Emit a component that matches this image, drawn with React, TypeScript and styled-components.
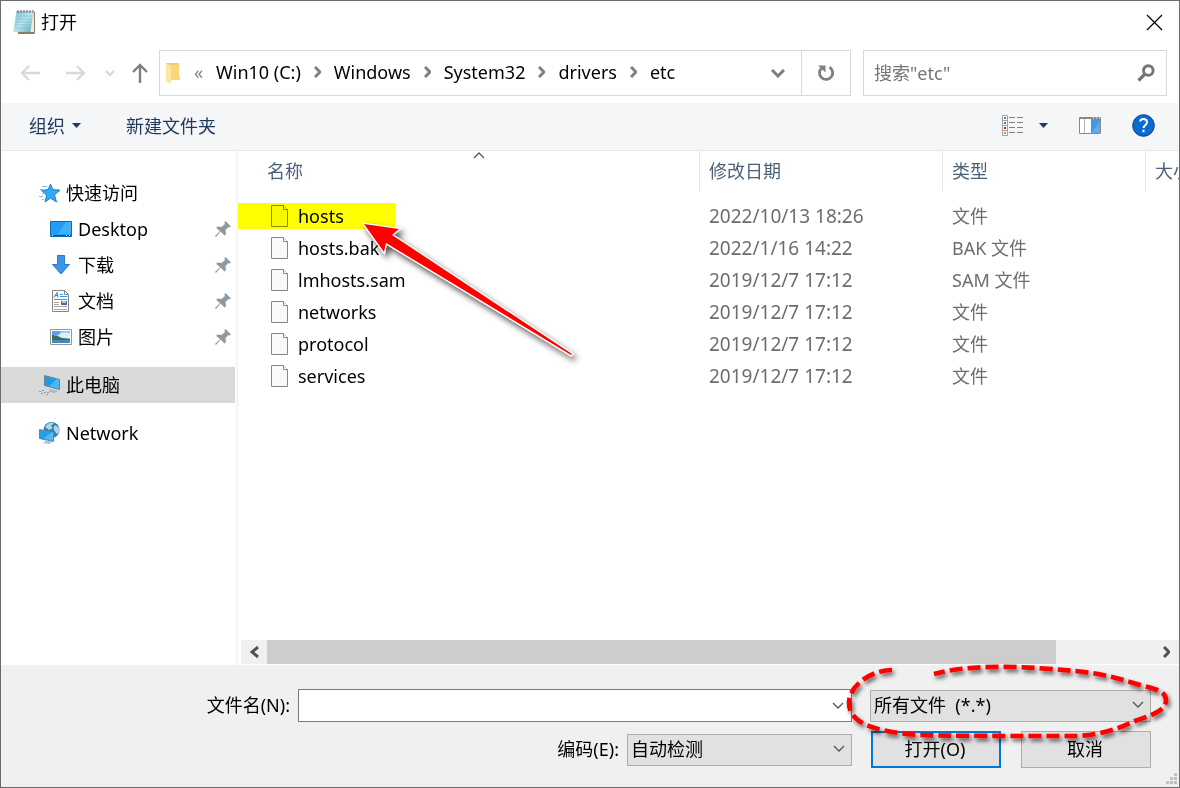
import React from "react";
import styled, { createGlobalStyle, css } from "styled-components";

const GlobalStyle = createGlobalStyle`
  *, *::before, *::after { box-sizing: border-box; }
  body {
    margin: 0;
    background: #fff;
    color: #000;
    font: 18px/24px "Noto Sans", "Noto Sans CJK SC", sans-serif;
  }
  button, input, select { font: inherit; color: inherit; }
  svg { display: block; flex: none; }
`;

const Dialog = styled.main`
  display: flex;
  flex-direction: column;
  min-height: 100vh;
  border: 1px solid #6b6b6b;
  background: #fff;
  overflow: hidden;
`;

const TitleBar = styled.header`
  display: flex;
  align-items: center;
  gap: 5px;
  height: 42px;
  padding-left: 11px;
`;

const Title = styled.h1`
  flex: 1;
  margin: 0;
  font-size: 18px;
  font-weight: 400;
`;

const PlainButton = styled.button`
  display: flex;
  align-items: center;
  justify-content: center;
  padding: 0;
  border: 0;
  background: none;
`;

const CloseButton = styled(PlainButton)`
  width: 50px;
  height: 42px;
`;

const NavBar = styled.nav`
  display: flex;
  height: 60px;
  padding: 7px 12px 7px 6px;
`;

const NavButton = styled(PlainButton)<{ $width: number }>`
  width: ${(p) => p.$width}px;
  color: ${(p) => (p.disabled ? "#d9d9d9" : "#7f7f7f")};
`;

const AddressBar = styled.div`
  display: flex;
  flex: 1;
  align-items: center;
  padding-left: 6px;
  border: 1px solid #d9d9d9;
`;

const Crumbs = styled.ol`
  display: flex;
  flex: 1;
  align-items: center;
  gap: 13px;
  margin: 0;
  padding: 0 0 2px 14px;
  list-style: none;
`;

const Crumb = styled.li`
  display: flex;
  align-items: center;
  gap: 13px;
  white-space: nowrap;
`;

const CrumbMore = styled.li`
  width: 9px;
  color: #7f7f7f;
`;

const CrumbLink = styled.a`
  color: #000;
  text-decoration: none;
`;

const AddressButton = styled(PlainButton)<{ $divided?: boolean }>`
  align-self: stretch;
  width: ${(p) => (p.$divided ? 49 : 46)}px;
  border-left: ${(p) => (p.$divided ? "1px solid #d9d9d9" : "0")};
`;

const SearchBox = styled.div`
  display: flex;
  align-items: center;
  width: 304px;
  margin-left: 12px;
  border: 1px solid #d9d9d9;
`;

const SearchInput = styled.input`
  flex: 1;
  min-width: 0;
  padding: 0 0 0 10px;
  border: 0;
  outline: 0;
  background: none;
  &::placeholder { color: #757575; opacity: 1; }
`;

const SearchButton = styled(PlainButton)`
  width: 41px;
  height: 44px;
`;

const Toolbar = styled.div`
  display: flex;
  align-items: center;
  height: 48px;
  padding: 0 24px 2px 28px;
  border-bottom: 1px solid #e6e7e8;
  background: #f5f6f7;
  color: #1e395b;
`;

const ToolButton = styled(PlainButton)`
  gap: 7px;
  height: 32px;
`;

const ToolGroup = styled.div`
  display: flex;
  flex: 1;
  align-items: center;
  gap: 45px;
`;

const ViewTools = styled.div`
  display: flex;
  align-items: center;
  gap: 31px;
`;

const ViewButton = styled(ToolButton)`
  gap: 16px;
`;

const Content = styled.div`
  display: flex;
  flex: 1;
`;

const Sidebar = styled.aside`
  width: 237px;
  padding: 24px 1px 0 0;
  border-right: 2px solid #f5f5f5;
`;

const TreeList = styled.ul`
  margin: 0;
  padding: 0;
  list-style: none;
`;

const TreeRow = styled.li<{ $nested?: boolean; $selected?: boolean; $spaced?: boolean }>`
  display: flex;
  align-items: center;
  height: 36px;
  margin-top: ${(p) => (p.$spaced ? 12 : 0)}px;
  padding: 0 4px 0 ${(p) => (p.$nested ? 48 : 36)}px;
  background: ${(p) => (p.$selected ? "#d9d9d9" : "none")};
`;

const TreeLink = styled.a`
  display: flex;
  flex: 1;
  align-items: center;
  gap: 5px;
  color: #000;
  text-decoration: none;
`;

const FilePane = styled.section`
  position: relative;
  display: flex;
  flex: 1;
  flex-direction: column;
  min-width: 0;
`;

const TableClip = styled.div`
  flex: 1;
  overflow: hidden;
`;

const FileTable = styled.table`
  width: 1045px;
  border-collapse: collapse;
  table-layout: fixed;
`;

const Column = styled.col<{ $width: number }>`
  width: ${(p) => p.$width}px;
`;

const HeadCell = styled.th`
  height: 49px;
  padding: 0;
  font-weight: 400;
  text-align: left;
  vertical-align: top;
`;

const HeadLabel = styled.div<{ $first?: boolean }>`
  display: flex;
  position: relative;
  align-items: center;
  height: 40px;
  margin-left: ${(p) => (p.$first ? 20 : 0)}px;
  padding-left: 9px;
  border-left: ${(p) => (p.$first ? "0" : "1px solid #e5e5e5")};
  color: #4c607a;
`;

const SortMark = styled.span`
  display: flex;
  position: absolute;
  top: 0;
  right: 0;
  left: 0;
  justify-content: center;
`;

const cell = css`
  height: 32px;
  padding: 0 0 0 10px;
  color: #6d6d6d;
  white-space: nowrap;
`;

const Cell = styled.td`
  ${cell}
`;

const DateCell = styled.td`
  ${cell}
  font-size: 19px;
`;

const NameCell = styled.td`
  position: relative;
  height: 32px;
  padding: 0 0 0 33px;
`;

const FileName = styled.span`
  display: flex;
  align-items: center;
  gap: 10px;
`;

const Marker = styled.span`
  position: absolute;
  z-index: 1;
  top: 3px;
  left: 0;
  width: 157px;
  height: 26px;
  background: #ff0;
  mix-blend-mode: multiply;
`;

const ArrowOverlay = styled.svg`
  position: absolute;
  z-index: 2;
  top: 59px;
  left: 112px;
  pointer-events: none;
`;

const ScrollBar = styled.div`
  display: flex;
  height: 24px;
  margin: 0 0 1px 3px;
  background: #f0f0f0;
`;

const ScrollButton = styled(PlainButton)`
  width: 26px;
`;

const ScrollTrack = styled.div`
  flex: 1;
`;

const ScrollThumb = styled.div`
  width: 89%;
  height: 24px;
  background: #cdcdcd;
`;

const Footer = styled.form`
  position: relative;
  display: flex;
  flex-direction: column;
  gap: 9px;
  height: 122px;
  padding: 24px 28px 0 0;
  background: #f0f0f0;
`;

const FieldRow = styled.div`
  display: flex;
  align-items: center;
  justify-content: flex-end;
`;

const FieldLabel = styled.label<{ $width?: number }>`
  width: ${(p) => (p.$width ? `${p.$width}px` : "auto")};
  margin-right: 8px;
  padding-bottom: 2px;
  text-align: right;
`;

const ComboBox = styled.div`
  display: flex;
  flex: 1;
  height: 33px;
  border: 1px solid #7a7a7a;
  background: #fff;
`;

const ComboInput = styled.input`
  flex: 1;
  min-width: 0;
  padding: 0 4px;
  border: 0;
  outline: 0;
  background: none;
`;

const ComboButton = styled(PlainButton)`
  width: 26px;
`;

const SelectWrap = styled.div<{ $width: number }>`
  position: relative;
  width: ${(p) => p.$width}px;
  height: 32px;
`;

const SelectBox = styled.select`
  width: 100%;
  height: 100%;
  padding: 0 28px 2px 3px;
  appearance: none;
  border: 1px solid #adadad;
  border-radius: 0;
  background: #e1e1e1;
  white-space: pre;
`;

const SelectMark = styled.span`
  position: absolute;
  top: 11px;
  right: 7px;
  pointer-events: none;
`;

const RingOverlay = styled.svg`
  position: absolute;
  z-index: 2;
  top: -30px;
  left: -30px;
  pointer-events: none;
`;

const DialogButton = styled.button<{ $primary?: boolean }>`
  width: 130px;
  height: 37px;
  padding: 0 2px 2px 0;
  border: ${(p) => (p.$primary ? "2px solid #0078d7" : "1px solid #adadad")};
  background: #e1e1e1;
`;

const Spacer = styled.span<{ $width: number }>`
  width: ${(p) => p.$width}px;
`;

const Grip = styled.span`
  position: absolute;
  right: 2px;
  bottom: 2px;
`;

const NotepadIcon = () => (
  <svg width="24" height="26" viewBox="0 0 24 26">
    <defs>
      <linearGradient id="pad" x1="0" y1="0" x2="1" y2="1">
        <stop offset="0" stopColor="#7cc0cf" />
        <stop offset=".5" stopColor="#b8e6ee" />
        <stop offset="1" stopColor="#62afc2" />
      </linearGradient>
    </defs>
    <path d="M6 3h17v21l-1 1H6z" fill="#8b7d62" />
    <path d="M6 3h16v20H6z" fill="#f3ead3" />
    <path d="M4.500 2h17l-3 21H1z" fill="url(#pad)" />
    <path d="M5 7h15M4 10h15M4 13h15M3 16h15M3 19h15" stroke="#5ba3b5" strokeOpacity=".4" />
    <path d="M6 1v3M9 1v3M12 1v3M15 1v3M18 1v3M21 1v3" stroke="#59676b" />
  </svg>
);

const CloseIcon = () => (
  <svg width="17" height="17" viewBox="0 0 17 17">
    <path d="M1 1l15 15M16 1L1 16" stroke="#000" strokeWidth="1.2" fill="none" />
  </svg>
);

const ArrowIcon = ({ d }: { d: string }) => (
  <svg width="20" height="20" viewBox="0 0 20 20">
    <path d={d} fill="none" stroke="currentColor" strokeWidth="2.4" />
  </svg>
);

const BoldChevron = ({
  dir,
  color = "#7f7f7f",
  width = 3,
}: {
  dir: "down" | "right" | "left";
  color?: string;
  width?: number;
}) => {
  const shape = {
    down: { w: 14, h: 9, d: "M1 1l6 6 6-6" },
    right: { w: 7, h: 12, d: "M1 1l5 5-5 5" },
    left: { w: 9, h: 12, d: "M8 1L2 6l6 5" },
  }[dir];
  return (
    <svg width={shape.w} height={shape.h} viewBox={`0 0 ${shape.w} ${shape.h}`}>
      <path d={shape.d} fill="none" stroke={color} strokeWidth={width} />
    </svg>
  );
};

const ThinChevron = ({ up }: { up?: boolean }) => (
  <svg width="12" height="8" viewBox="0 0 12 8">
    <path d={up ? "M1 7l5-5 5 5" : "M1 1l5 5 5-5"} fill="none" stroke="#555" strokeWidth="1.3" />
  </svg>
);

const FolderIcon = () => (
  <svg width="14" height="22" viewBox="0 0 14 22">
    <path d="M0 1h13v11l1 6H4z" fill="#f5cb65" />
    <path d="M5 3h8v15H5z" fill="#f7d67f" />
    <path d="M0 1l5 3v18l-5-3z" fill="#fde6a4" />
  </svg>
);

const RefreshIcon = () => (
  <svg width="18" height="18" viewBox="0 0 18 18">
    <path d="M12.500 3.2A6.6 6.6 0 1 1 4.6 4" fill="none" stroke="#7f7f7f" strokeWidth="2.8" />
    <path d="M1 1.500h7.500V8.500z" fill="#7f7f7f" />
  </svg>
);

const SearchIcon = () => (
  <svg width="18" height="18" viewBox="0 0 18 18">
    <circle cx="11.3" cy="6.5" r="4.8" fill="none" stroke="#757575" strokeWidth="2.9" />
    <path d="M8 10L1.500 16.500" stroke="#757575" strokeWidth="3.2" />
  </svg>
);

const CaretIcon = () => (
  <svg width="9" height="5" viewBox="0 0 9 5">
    <path d="M0 0h9L4.500 5z" fill="#1e395b" />
  </svg>
);

const ListViewIcon = () => (
  <svg width="21" height="21" viewBox="0 0 21 21">
    <path d="M.500 .500h5v20h-5zM.500 5.500h5M.500 10.500h5M.500 15.500h5" fill="#fff" stroke="#a0a0a0" />
    <path d="M2 2h2v2H2z" fill="#3d8a83" />
    <path d="M2 7h2v2H2z" fill="#4775b5" />
    <path d="M2 12h2v2H2z" fill="#c01515" />
    <path d="M2 17h2v2H2z" fill="#90a33a" />
    <path
      d="M7 2.500h6M15 2.500h6M7 7.500h6M15 7.500h6M7 12.500h6M15 12.500h6M7 17.500h6M15 17.500h6"
      stroke="#808080"
    />
  </svg>
);

const PreviewIcon = () => (
  <svg width="22" height="17" viewBox="0 0 22 17">
    <path d="M.500 .500h21v16H.500z" fill="#fff" stroke="#8a8a8a" />
    <path d="M1 1h20" stroke="#8a8a8a" strokeWidth="2" />
    <path d="M5.500 2v14" stroke="#b0b0b0" />
    <path d="M12 2h9v14h-9z" fill="#429be2" />
    <path d="M12 16L21 4v12z" fill="#5aaced" />
    <path d="M14 1h1M17 1h1M20 1h1" stroke="#fff" />
  </svg>
);

const HelpIcon = () => (
  <svg width="23" height="23" viewBox="0 0 23 23">
    <circle cx="11.5" cy="11.5" r="10.8" fill="#0c6bd0" stroke="#0b4287" />
    <path
      d="M8 7.500c1.200-3.600 7-3 7 .7 0 3-3.500 3-3.500 5.800M11.500 15.800v2.400"
      fill="none"
      stroke="#fff"
      strokeWidth="2"
    />
  </svg>
);

const StarIcon = () => (
  <svg width="24" height="20" viewBox="0 0 24 20">
    <path
      d="M13.500 1l2.200 5.600 7.300.5-5.500 4.800 2 7-6-3.700L8 19l1.600-6.800L4.500 7.400l6.600-.8z"
      fill="#35a8f3"
      stroke="#1a83ce"
    />
    <path d="M5 3.500h5M3 6.500h3M5 10.500h3M2 13.500h4M5 16.500h2" stroke="#79c3ef" />
  </svg>
);

const DesktopIcon = () => (
  <svg width="24" height="18" viewBox="0 0 24 18">
    <path d="M1.500 1.500h21v15h-21z" fill="#1f9dfb" stroke="#116da8" />
    <path d="M9 14L17 2h5v12z" fill="#42afff" />
    <path d="M2 15.500h20" stroke="#08548d" />
    <path d="M3 15.500h1M17 15.500h1M20 15.500h1" stroke="#fff" />
  </svg>
);

const DownloadIcon = () => (
  <svg width="24" height="20" viewBox="0 0 24 20">
    <path d="M8.500 .500h7v9h5L12 19 3.500 9.500h5z" fill="#3a96e8" stroke="#2b79c8" />
  </svg>
);

const DocumentIcon = () => (
  <svg width="24" height="22" viewBox="0 0 24 22">
    <path d="M3.500 .500h12l4 4v17h-16z" fill="#fff" stroke="#858585" />
    <path d="M15.500 .500v4h4" fill="none" stroke="#858585" />
    <path d="M5 7.500l3-5 1 5M6 5.500h3" fill="none" stroke="#2784c9" />
    <path d="M11 4.500h3M11 6.500h7M5 9.500h13" stroke="#2e9be3" />
    <path d="M5 12.500h5M5 14.500h5M5 16.500h13M5 19.500h13" stroke="#a4a4a4" />
    <path d="M12 11h6v4h-6z" fill="#4c6c9c" />
    <path d="M13 11h4v2h-4z" fill="#a6c9e9" />
  </svg>
);

const PictureIcon = () => (
  <svg width="24" height="18" viewBox="0 0 24 18">
    <path d="M1.500 1.500h21v15h-21z" fill="#fff" stroke="#959595" />
    <path d="M3 3h18v12H3z" fill="#8fc4f2" />
    <path d="M3 3h7l3 3-10 2z" fill="#5f9fe2" />
    <path d="M9 7c3-3 7-3 12-2v5h-9z" fill="#deeffa" />
    <path d="M3 7l5 1 5 2 8 1v2H3z" fill="#3c6c5c" />
    <path d="M3 12h18v3H3z" fill="#4a86b8" />
  </svg>
);

const ComputerIcon = () => (
  <svg width="24" height="22" viewBox="0 0 24 22">
    <path d="M7.500 1.500l15 4v10l-15-4z" fill="#1e9be8" stroke="#70828c" />
    <path d="M12 12L20 5l2 1v9z" fill="#4ab6f4" />
    <path d="M12 15l9 2-3 2-6-1z" fill="#aeb7bd" />
    <path d="M3 16l11 2-3 3-10-2z" fill="#d3dade" />
    <path d="M2 17.500h2M5 16.500h2M7 18.500h2M4 19.500h2M10 18.500h2M9 20.500h2" stroke="#8f9ca3" />
  </svg>
);

const NetworkIcon = () => (
  <svg width="24" height="24" viewBox="0 0 24 24">
    <circle cx="14.5" cy="9" r="8" fill="#367fac" />
    <path d="M8 6c2-4 6-5 9-4l-3 3 2 2-4 2zM17.500 4l4 2 1 5-3 2-3-5z" fill="#acd3e7" />
    <path d="M2.500 8.500l14 3v9l-14-3z" fill="#20a0eb" stroke="#668798" />
    <path d="M7 17l8-6 1 1v8z" fill="#4fbaf4" />
    <path d="M8 19v2l-3 1 7 1 3-1-3-2z" fill="#b8c1c6" />
  </svg>
);

const PinIcon = () => (
  <svg width="16" height="16" viewBox="0 0 16 16">
    <path d="M10.500 0L16 5.500l-1.500 1-1-.5-3 3 .5 4-1.500 1.500-4-4L1 16l-1-1 5-5-3.800-3L2.500 5.500l4 .500 3.500-3-.7-1.500z" fill="#8d99a3" />
  </svg>
);

const FileIcon = () => (
  <svg width="17" height="22" viewBox="0 0 17 22">
    <path d="M.500 .500h12l4 4v17H.500z" fill="#f8f9fa" stroke="#868686" />
    <path d="M12.500 .500v4h4" fill="#fff" stroke="#868686" />
  </svg>
);

const crumbs = ["Win10 (C:)", "Windows", "System32", "drivers", "etc"];

const quickLinks = [
  { label: "Desktop", Icon: DesktopIcon },
  { label: "下载", Icon: DownloadIcon },
  { label: "文档", Icon: DocumentIcon },
  { label: "图片", Icon: PictureIcon },
];

const files = [
  { name: "hosts", date: "2022/10/13 18:26", type: "文件", marked: true },
  { name: "hosts.bak", date: "2022/1/16 14:22", type: "BAK 文件" },
  { name: "lmhosts.sam", date: "2019/12/7 17:12", type: "SAM 文件" },
  { name: "networks", date: "2019/12/7 17:12", type: "文件" },
  { name: "protocol", date: "2019/12/7 17:12", type: "文件" },
  { name: "services", date: "2019/12/7 17:12", type: "文件" },
];

export default function App() {
  return (
    <>
      <GlobalStyle />
      <Dialog lang="zh-CN">
        <TitleBar>
          <NotepadIcon />
          <Title>打开</Title>
          <CloseButton type="button" aria-label="关闭">
            <CloseIcon />
          </CloseButton>
        </TitleBar>

        <NavBar>
          <NavButton $width={46} type="button" disabled aria-label="后退">
            <ArrowIcon d="M20 10H2M9 3l-7 7 7 7" />
          </NavButton>
          <NavButton $width={46} type="button" disabled aria-label="前进">
            <ArrowIcon d="M0 10h18M11 3l7 7-7 7" />
          </NavButton>
          <NavButton $width={21} type="button" disabled aria-label="最近">
            <svg width="10" height="7" viewBox="0 0 10 7">
              <path d="M1 1l4 4 4-4" fill="none" stroke="currentColor" strokeWidth="2.4" />
            </svg>
          </NavButton>
          <NavButton $width={39} type="button" aria-label="上移">
            <ArrowIcon d="M10 20V2M3 9l7-7 7 7" />
          </NavButton>
          <AddressBar>
            <FolderIcon />
            <Crumbs>
              <CrumbMore>«</CrumbMore>
              {crumbs.map((c, i) => (
                <Crumb key={c}>
                  <CrumbLink href="#">{c}</CrumbLink>
                  {i < crumbs.length - 1 && <BoldChevron dir="right" />}
                </Crumb>
              ))}
            </Crumbs>
            <AddressButton type="button" aria-label="历史记录">
              <BoldChevron dir="down" />
            </AddressButton>
            <AddressButton $divided type="button" aria-label="刷新">
              <RefreshIcon />
            </AddressButton>
          </AddressBar>
          <SearchBox>
            <SearchInput type="text" aria-label="搜索" placeholder={'搜索"etc"'} />
            <SearchButton type="button" aria-label="开始搜索">
              <SearchIcon />
            </SearchButton>
          </SearchBox>
        </NavBar>

        <Toolbar>
          <ToolGroup>
            <ToolButton type="button">
              组织
              <CaretIcon />
            </ToolButton>
            <ToolButton type="button">新建文件夹</ToolButton>
          </ToolGroup>
          <ViewTools>
            <ViewButton type="button" aria-label="更改视图">
              <ListViewIcon />
              <CaretIcon />
            </ViewButton>
            <ToolButton type="button" aria-label="预览窗格">
              <PreviewIcon />
            </ToolButton>
            <ToolButton type="button" aria-label="帮助">
              <HelpIcon />
            </ToolButton>
          </ViewTools>
        </Toolbar>

        <Content>
          <Sidebar>
            <TreeList>
              <TreeRow>
                <TreeLink href="#">
                  <StarIcon />
                  快速访问
                </TreeLink>
              </TreeRow>
              {quickLinks.map(({ label, Icon }) => (
                <TreeRow key={label} $nested>
                  <TreeLink href="#">
                    <Icon />
                    {label}
                  </TreeLink>
                  <PinIcon />
                </TreeRow>
              ))}
              <TreeRow $selected $spaced>
                <TreeLink href="#">
                  <ComputerIcon />
                  此电脑
                </TreeLink>
              </TreeRow>
              <TreeRow $spaced>
                <TreeLink href="#">
                  <NetworkIcon />
                  Network
                </TreeLink>
              </TreeRow>
            </TreeList>
          </Sidebar>

          <FilePane>
            <TableClip>
              <FileTable>
                <colgroup>
                  <Column $width={461} />
                  <Column $width={243} />
                  <Column $width={203} />
                  <Column $width={138} />
                </colgroup>
                <thead>
                  <tr>
                    <HeadCell>
                      <HeadLabel $first>
                        名称
                        <SortMark>
                          <ThinChevron up />
                        </SortMark>
                      </HeadLabel>
                    </HeadCell>
                    <HeadCell>
                      <HeadLabel>修改日期</HeadLabel>
                    </HeadCell>
                    <HeadCell>
                      <HeadLabel>类型</HeadLabel>
                    </HeadCell>
                    <HeadCell>
                      <HeadLabel>大小</HeadLabel>
                    </HeadCell>
                  </tr>
                </thead>
                <tbody>
                  {files.map((f) => (
                    <tr key={f.name}>
                      <NameCell>
                        <FileName>
                          <FileIcon />
                          {f.name}
                        </FileName>
                        {f.marked && <Marker />}
                      </NameCell>
                      <DateCell>{f.date}</DateCell>
                      <Cell>{f.type}</Cell>
                      <Cell />
                    </tr>
                  ))}
                </tbody>
              </FileTable>
            </TableClip>
            <ArrowOverlay width="240" height="160" viewBox="350 210 240 160" aria-hidden="true">
              <defs>
                <filter id="arrowShadow" x="-10%" y="-10%" width="125%" height="130%">
                  <feDropShadow dx="3" dy="4" stdDeviation="3" floodOpacity=".7" />
                </filter>
              </defs>
              <path
                d="M364 224l35 5-7 6 180 119-1 1-185-112-2 9z"
                fill="#f00"
                stroke="#fff"
                strokeWidth="2.4"
                paintOrder="stroke"
                filter="url(#arrowShadow)"
              />
            </ArrowOverlay>
            <ScrollBar>
              <ScrollButton type="button" aria-label="向左滚动">
                <BoldChevron dir="left" color="#505050" />
              </ScrollButton>
              <ScrollTrack>
                <ScrollThumb />
              </ScrollTrack>
              <ScrollButton type="button" aria-label="向右滚动">
                <BoldChevron dir="right" color="#505050" />
              </ScrollButton>
            </ScrollBar>
          </FilePane>
        </Content>

        <Footer onSubmit={(e) => e.preventDefault()}>
          <FieldRow>
            <FieldLabel $width={289} htmlFor="filename">
              文件名(N):
            </FieldLabel>
            <ComboBox>
              <ComboInput id="filename" type="text" />
              <ComboButton type="button" aria-label="文件名列表">
                <ThinChevron />
              </ComboButton>
            </ComboBox>
            <Spacer $width={18} />
            <SelectWrap $width={281}>
              <SelectBox aria-label="文件类型">
                <option>{"所有文件\u00a0 (*.*)"}</option>
              </SelectBox>
              <SelectMark>
                <ThinChevron />
              </SelectMark>
              <RingOverlay width="338" height="92" viewBox="840 660 338 92" aria-hidden="true">
                <defs>
                  <filter id="ringShadow" x="-5%" y="-15%" width="112%" height="140%">
                    <feDropShadow dx="2" dy="3" stdDeviation="2" floodOpacity=".6" />
                  </filter>
                </defs>
                <path
                  d="M892 670C872 670 849 685 849 703C849 722 872 732 920 735C945 736 1020 736 1078 736C1105 734 1120 728 1135 721C1155 714 1166 710 1166 700C1166 691 1155 689 1140 685C1120 679 1105 674 1075 671C1030 667 975 663 934 674"
                  fill="none"
                  stroke="#f00"
                  strokeWidth="4.6"
                  strokeDasharray="13 5"
                  filter="url(#ringShadow)"
                />
              </RingOverlay>
            </SelectWrap>
          </FieldRow>
          <FieldRow>
            <FieldLabel htmlFor="encoding">编码(E):</FieldLabel>
            <SelectWrap $width={225}>
              <SelectBox id="encoding">
                <option>自动检测</option>
              </SelectBox>
              <SelectMark>
                <ThinChevron />
              </SelectMark>
            </SelectWrap>
            <Spacer $width={19} />
            <DialogButton $primary type="submit">
              打开(O)
            </DialogButton>
            <Spacer $width={20} />
            <DialogButton type="button">取消</DialogButton>
          </FieldRow>
          <Grip>
            <svg width="12" height="12" viewBox="0 0 12 12">
              <path
                d="M9 0h3v3H9zM5 4h3v3H5zM9 4h3v3H9zM1 8h3v3H1zM5 8h3v3H5zM9 8h3v3H9z"
                fill="#bfbfbf"
              />
            </svg>
          </Grip>
        </Footer>
      </Dialog>
    </>
  );
}
